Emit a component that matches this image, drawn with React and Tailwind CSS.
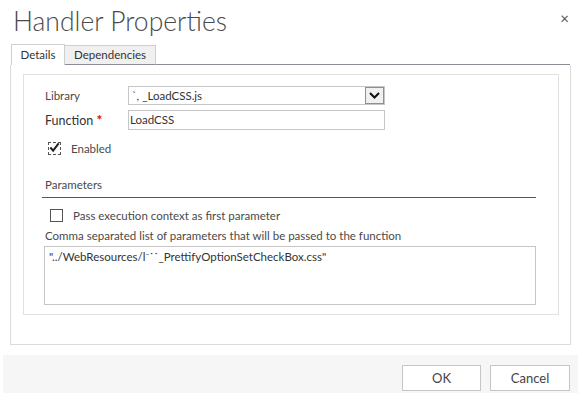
import { useState } from "react";

const font = { fontFamily: 'Lato, "Open Sans", sans-serif' };

function Check({ checked, focused }) {
    return (
        <span
            className={
                "flex h-[13px] w-[13px] shrink-0 items-center justify-center border bg-white " +
                (focused ? "border-dashed border-[#555]" : "border-[#555]")
            }
        >
            {checked && (
                <svg width="12" height="11" viewBox="0 0 12 11" className="-mt-[2px]">
                    <path d="M1.5 5.5 L4.5 9 L10.5 1" stroke="#222" strokeWidth="2.2" fill="none" />
                </svg>
            )}
        </span>
    );
}

export default function App() {
    const [enabled, setEnabled] = useState(true);
    const [passCtx, setPassCtx] = useState(false);

    return (
        <div style={font} className="flex h-[393px] w-[581px] flex-col overflow-hidden bg-white text-[11.5px] leading-[16px] text-[#4a4a4a]">
            {/* Header */}
            <div className="flex h-[44px] items-start justify-between pl-[13px] pr-[12px]">
                <h1 className="mt-[2px] text-[26.5px] font-light leading-[38px] text-[#4a4a4a]">
                    Handler Properties
                </h1>
                <button className="mt-[11px] text-[15px] leading-[15px] text-[#555]">×</button>
            </div>

            {/* Tabs */}
            <div className="mx-[11px] flex h-[21px] items-end">
                <div className="flex h-[21px] w-[54px] items-center justify-center border border-b-0 border-[#cfcfcf] bg-white text-[#333]">
                    Details
                </div>
                <div className="flex h-[20px] w-[91px] items-center justify-center border border-l-0 border-[#cfcfcf] border-b-[#8c8c96] bg-[#f0f0f0] text-[#333]">
                    Dependencies
                </div>
                <div className="h-[21px] flex-1 border-b border-[#8c8c96]" />
            </div>

            {/* Panel */}
            <div className="mx-[10px] flex h-[280px] flex-col border border-t-0 border-[#dcdcdc] pt-[9px]">
                <div className="ml-[12px] mr-[11px] flex h-[241px] flex-col border border-[#e2e2e2] pl-[21px]">
                    <div className="mt-[11px] flex items-center">
                        <span className="w-[83px]">Library</span>
                        <div className="flex h-[19px] w-[257px] items-center border border-[#c6c6c6]">
                            <span className="flex-1 pl-[3px] text-[#333]">`, _LoadCSS.js</span>
                            <span className="flex h-[17px] w-[19px] items-center justify-center border border-[#8f8f8f] bg-[#f0f0f0]">
                                <svg width="11" height="7" viewBox="0 0 11 7">
                                    <path d="M1 1 L5.5 5.5 L10 1" stroke="#111" strokeWidth="2" fill="none" />
                                </svg>
                            </span>
                        </div>
                    </div>
                    <div className="mt-[5px] flex items-center">
                        <span className="w-[83px] text-[12.5px] text-[#333]">
                            Function <span className="text-[14px] font-bold text-[#e00]">*</span>
                        </span>
                        <div className="flex h-[20px] w-[257px] items-center border border-[#c6c6c6] pl-[1px] text-[#333]">
                            LoadCSS
                        </div>
                    </div>
                    <label className="mt-[12px] ml-[3px] flex h-[13px] cursor-pointer items-center gap-[10px]" onClick={() => setEnabled(!enabled)}>
                        <Check checked={enabled} focused />
                        <span>Enabled</span>
                    </label>

                    <div className="mt-[22px] mr-[22px] -ml-[3px] border-b border-[#555] pb-[4px] pl-[3px]">Parameters</div>
                    <label className="mt-[11px] ml-[5px] flex h-[13px] cursor-pointer items-center gap-[10px]" onClick={() => setPassCtx(!passCtx)}>
                        <Check checked={passCtx} />
                        <span>Pass execution context as first parameter</span>
                    </label>
                    <div className="mt-[6px]">Comma separated list of parameters that will be passed to the function</div>
                    <div className="mt-[2px] mr-[22px] -ml-[1px] h-[59px] border border-[#c6c6c6] px-[4px] pt-[2px] text-[#333]">
                        "../WebResources/l⁻˙˙_PrettifyOptionSetCheckBox.css"
                    </div>
                </div>
            </div>

            {/* Footer */}
            <div className="mx-[3px] mt-[10px] flex h-[38px] items-start justify-end gap-[9px] bg-[#f6f6f6] pr-[8px] pt-[10px]">
                <button className="h-[26px] w-[79px] border border-[#c6c6c6] bg-white text-[13px] text-[#444]">OK</button>
                <button className="h-[26px] w-[80px] border border-[#c6c6c6] bg-white text-[13px] text-[#444]">Cancel</button>
            </div>
        </div>
    );
}
